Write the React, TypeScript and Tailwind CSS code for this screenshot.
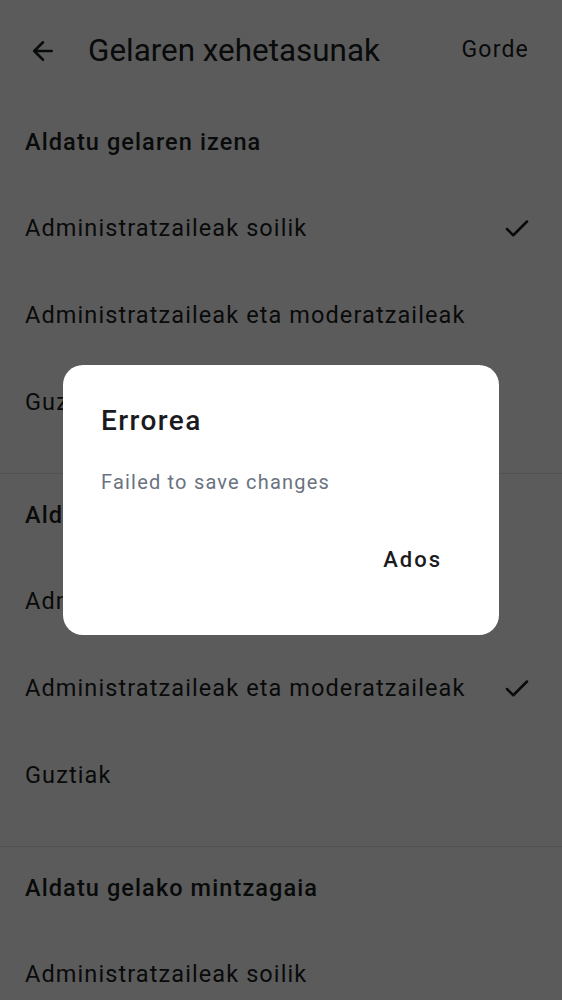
import { ArrowLeft, Check } from "lucide-react";

type Section = { title: string; options: string[]; selected: number };

const options = [
  "Administratzaileak soilik",
  "Administratzaileak eta moderatzaileak",
  "Guztiak",
];

// the last section runs off the screen, only its first row is visible
const sections: Section[] = [
  { title: "Aldatu gelaren izena", options, selected: 0 },
  { title: "Aldatu gelaren irudia", options, selected: 1 },
  { title: "Aldatu gelako mintzagaia", options: options.slice(0, 1), selected: -1 },
];

export default function App() {
  return (
    <div
      className="relative h-[1000px] w-[562px] overflow-hidden bg-white text-[#1a1c1e]"
      style={{ fontFamily: "Roboto, 'Noto Sans', sans-serif" }}
    >
      <header className="flex h-[101px] items-center pl-[28px] pr-[33px]">
        <ArrowLeft className="size-[30px]" strokeWidth={2} />
        <h1 className="ml-[30px] flex-1 text-[31.4px] font-normal">
          Gelaren xehetasunak
        </h1>
        <button type="button" className="text-[23px] font-normal tracking-[1.2px]">
          Gorde
        </button>
      </header>

      {sections.map((s) => (
        <section key={s.title} className="border-b border-[#e6e6e6] pb-[27px]">
          <div className="flex h-[84px] items-center px-[25px] text-[23.5px] font-medium tracking-[1.1px]">
            {s.title}
          </div>
          {s.options.map((opt, j) => (
            <div
              key={opt}
              className="flex h-[87px] items-center justify-between pl-[25px] pr-[30px] text-[23.5px] tracking-[1.1px]"
            >
              <span>{opt}</span>
              {j === s.selected ? (
                <Check className="size-[30px]" strokeWidth={2} />
              ) : null}
            </div>
          ))}
        </section>
      ))}

      <div className="absolute inset-0 flex items-center justify-center bg-[rgba(0,0,0,0.643)]">
        <div className="flex h-[270px] w-[436px] flex-col rounded-[20px] bg-white px-[38px] pt-[38px]">
          <h2 className="text-[28px] font-medium leading-[36px] tracking-[1.4px] text-[#1b1b1f]">
            Errorea
          </h2>
          <p className="mt-[30px] text-[20px] leading-[26px] tracking-[1.2px] text-[#6b7280]">
            Failed to save changes
          </p>
          <div className="mt-[51px] flex justify-end pr-[19px]">
            <button
              type="button"
              className="text-[22px] font-medium leading-[28px] tracking-[2px] text-[#1b1b1f]"
            >
              Ados
            </button>
          </div>
        </div>
      </div>
    </div>
  );
}
